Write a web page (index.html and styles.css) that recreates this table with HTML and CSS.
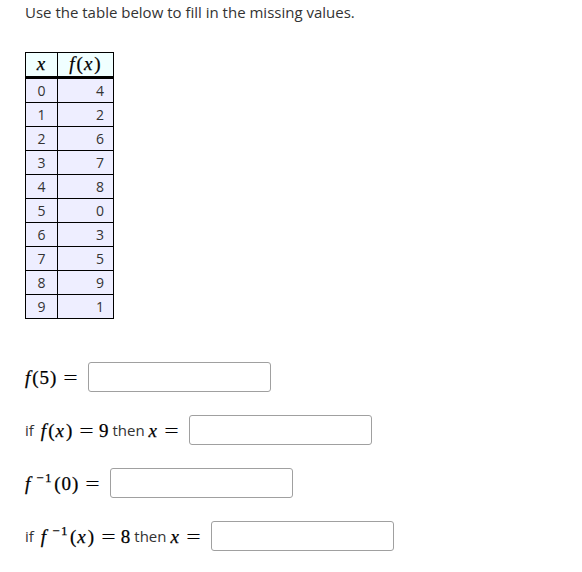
FILE: index.html
```html
<!DOCTYPE html>
<html>
<head>
<meta charset="utf-8">
<link rel="stylesheet" href="styles.css">
</head>
<body>
<div class="page">
  <p class="intro">Use the table below to fill in the missing values.</p>
  <table class="values">
    <thead>
      <tr><th class="cx"><span class="math"><span class="mi">x</span></span></th><th class="cf"><span class="math"><span class="mi">f</span><span class="p">(</span><span class="mi">x</span><span class="p">)</span></span></th></tr>
    </thead>
    <tbody>
      <tr><td class="cx">0</td><td class="cf">4</td></tr>
      <tr><td class="cx">1</td><td class="cf">2</td></tr>
      <tr><td class="cx">2</td><td class="cf">6</td></tr>
      <tr><td class="cx">3</td><td class="cf">7</td></tr>
      <tr><td class="cx">4</td><td class="cf">8</td></tr>
      <tr><td class="cx">5</td><td class="cf">0</td></tr>
      <tr><td class="cx">6</td><td class="cf">3</td></tr>
      <tr><td class="cx">7</td><td class="cf">5</td></tr>
      <tr><td class="cx">8</td><td class="cf">9</td></tr>
      <tr><td class="cx">9</td><td class="cf">1</td></tr>
    </tbody>
  </table>
  <div class="questions">
    <div class="q"><span class="math"><span class="mi">f</span><span class="p">(</span>5<span class="p">)</span><span class="eq">=</span></span><input class="ans" type="text"></div>
    <div class="q"><span class="word">if</span><span class="math"><span class="mi">f</span><span class="p">(</span><span class="mi">x</span><span class="p">)</span><span class="eq">=</span>9</span><span class="word gap">then</span><span class="math"><span class="mi">x</span><span class="eq">=</span></span><input class="ans" type="text"></div>
    <div class="q"><span class="math"><span class="mi">f</span><span class="sup">&minus;1</span><span class="p">(</span>0<span class="p">)</span><span class="eq">=</span></span><input class="ans" type="text"></div>
    <div class="q"><span class="word">if</span><span class="math"><span class="mi">f</span><span class="sup">&minus;1</span><span class="p">(</span><span class="mi">x</span><span class="p">)</span><span class="eq">=</span>8</span><span class="word gap">then</span><span class="math"><span class="mi">x</span><span class="eq">=</span></span><input class="ans" type="text"></div>
  </div>
</div>
</body>
</html>
```
FILE: styles.css
```css
html, body {
  margin: 0;
  padding: 0;
  background: #fff;
}
body {
  font-family: "Open Sans", "Liberation Sans", sans-serif;
  font-size: 15px;
  color: #333;
}
.page {
  padding: 2px 25px 0 25px;
}
.intro {
  margin: 0;
  line-height: 20px;
}
.values {
  border-collapse: collapse;
  margin-top: 30px;
  border: 1px solid #000;
}
.values th, .values td {
  border: 1px solid #000;
  padding: 0 4px;
  height: 23px;
  line-height: 23px;
}
.values th {
  background: #f0ffff;
  font-weight: normal;
  border-bottom: 3px solid #000;
  text-align: center;
}
.values td {
  background: #eeeeff;
  font-size: 14px;
}
.cx {
  width: 23px;
  text-align: center;
}
.values td.cf {
  width: 42px;
  padding-right: 9px;
  text-align: right;
}
.values th.cf {
  width: 47px;
}
.math {
  font-family: "Liberation Serif", "DejaVu Serif", serif;
  font-size: 19px;
  color: #000;
  white-space: nowrap;
  line-height: 1;
  -webkit-text-stroke: 0.25px #000;
}
.mi {
  font-style: italic;
  padding-right: 1px;
}
.p {
  padding: 0 1px;
}
.sup {
  font-size: 13px;
  position: relative;
  top: -8px;
  margin-left: 5px;
  letter-spacing: 1.5px;
}
.eq {
  display: inline-block;
  margin: 0 7px 0 8px;
  transform: scaleX(1.3);
}
.word {
  margin-right: 7px;
}
.word.gap {
  margin-left: 4px;
  margin-right: 4px;
}
.questions {
  margin-top: 43px;
  display: flex;
  flex-direction: column;
  gap: 23px;
}
.q {
  display: flex;
  align-items: center;
  height: 30px;
}
.ans {
  width: 183px;
  height: 30px;
  box-sizing: border-box;
  border: 1px solid #a0a0a0;
  border-radius: 3px;
  margin-left: 5px;
  padding: 0 6px;
  background: #fff;
  font-size: 14px;
}
```
